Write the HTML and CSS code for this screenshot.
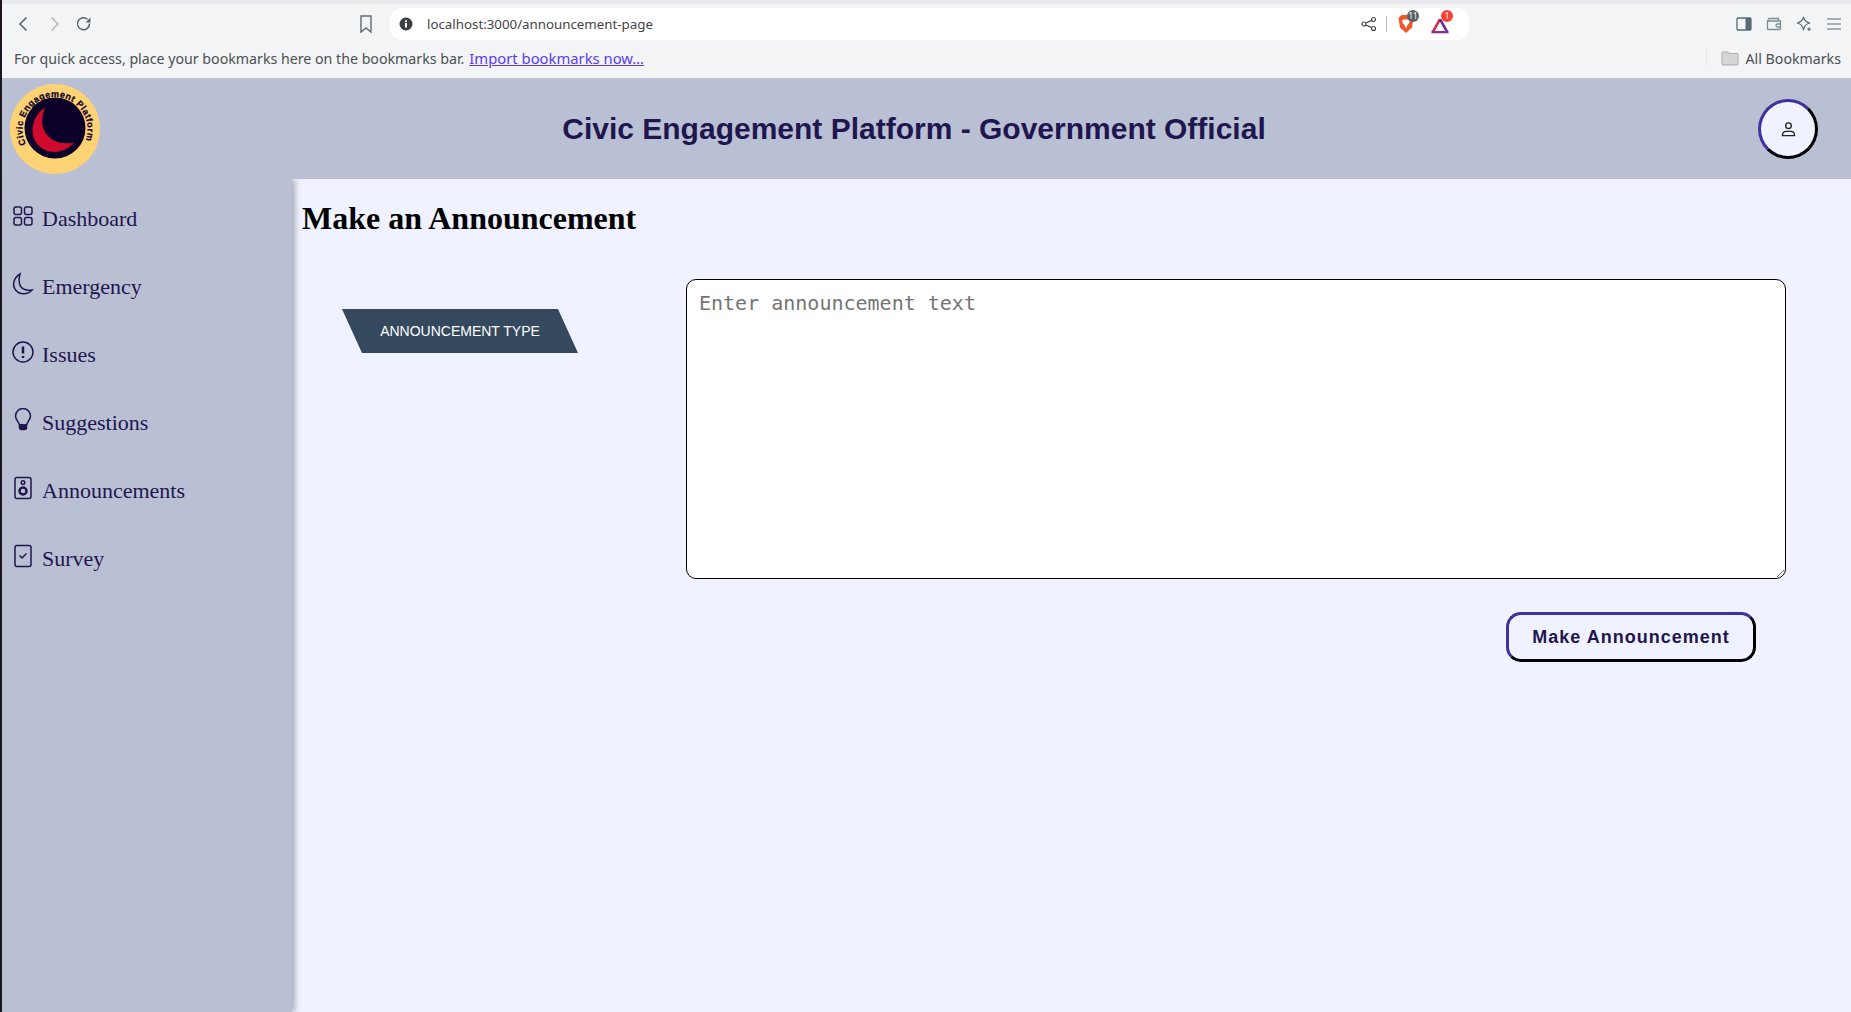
FILE: index.html
```html
<!DOCTYPE html>
<html lang="en">
<head>
	<meta charset="UTF-8">
	<title>Make an Announcement</title>
	<link rel="stylesheet" href="styles.css">
</head>
<body>
	<div class="window">
		<div class="tabstrip"></div>
		<div class="toolbar">
			<div class="nav-btns">
				<svg class="tool-icon" viewBox="0 0 20 20"><path d="M12.500 3.500 6 10l6.500 6.500"/></svg>
				<svg class="tool-icon faded" viewBox="0 0 20 20"><path d="M7.500 3.500 14 10l-6.500 6.500"/></svg>
				<svg class="tool-icon" viewBox="0 0 20 20"><path d="M15.500 9.500a6 6 0 1 1-2-4.300"/><path class="fill" d="M16.500 3.500v5h-5z"/></svg>
			</div>
			<svg class="bookmark-icon" viewBox="0 0 16 20"><path d="M3 2h10v16l-5-4-5 4z"/></svg>
			<div class="addressbar">
				<svg class="info-icon" viewBox="0 0 14 14"><circle cx="7" cy="7" r="6.500"/><rect x="6" y="6" width="2" height="4.500" fill="#fff"/><rect x="6" y="3.300" width="2" height="1.800" fill="#fff"/></svg>
				<span class="url">localhost:3000/announcement-page</span>
				<svg class="share-icon" viewBox="0 0 16 16"><circle cx="12.500" cy="3.500" r="2"/><circle cx="12.500" cy="12.500" r="2"/><circle cx="3" cy="8" r="2"/><path d="M4.800 7 10.700 4.400M4.800 9l5.900 2.600"/></svg>
				<span class="addr-sep"></span>
				<div class="ext">
					<svg viewBox="0 0 18 20" class="brave"><path d="M4.500 1h9l3 3-1.500 9.500L9 19l-6-5.500L1.500 4z" fill="#f1562b"/><path d="M5 6.500 7 5.500h4l2 1-1 3-1.500 1.500L9 14.500 7.500 11 6 9.500z" fill="#fff"/></svg>
					<span class="ext-badge grey">11</span>
				</div>
				<div class="ext rewards">
					<svg viewBox="0 0 20 18" class="triangle"><path d="M10 1.500 2 15.500" fill="none" stroke="#d9254f" stroke-width="2.800"/><path d="M10 1.500 18 15.500" fill="none" stroke="#662d91" stroke-width="2.800"/><path d="M0.500 15.800h19" stroke="#8a2f8f" stroke-width="2.600"/></svg>
					<span class="ext-badge red">1</span>
				</div>
			</div>
			<div class="tool-right">
				<svg viewBox="0 0 16 16" class="side-icon"><rect x="1" y="2" width="14" height="12" rx="1" fill="none" stroke="#566b75" stroke-width="1.300"/><rect x="9.500" y="2" width="5.500" height="12" fill="#566b75"/></svg>
				<svg viewBox="0 0 16 16" class="side-icon"><path d="M14.500 5H2.500a1 1 0 0 1-1-1v8.500a1 1 0 0 0 1 1h11a1 1 0 0 0 1-1zM2 3.500 3 2.500h9.500V5M14.500 8h-3a1.500 1.500 0 0 0 0 3h3" fill="none" stroke="#7a8c95" stroke-width="1.300"/></svg>
				<svg viewBox="0 0 16 16" class="side-icon"><path d="M7.500 1.200c.7 3 2.600 5 6.300 5.800-3.700.8-5.600 2.800-6.300 6.800-.7-4-2.600-6-6.300-6.800 3.700-.8 5.600-2.800 6.300-5.800z" fill="none" stroke="#566b75" stroke-width="1.200" stroke-linejoin="round"/><path d="M13 11.500v3.500M11.300 13.200h3.400" stroke="#566b75" stroke-width="1.200"/></svg>
				<svg viewBox="0 0 16 16" class="side-icon"><path d="M1 3h14M1 8h14M1 13h14" stroke="#566b75" stroke-width="1.200"/></svg>
			</div>
		</div>
		<div class="bookmarks">
			<span class="bm-msg">For quick access, place your bookmarks here on the bookmarks bar.</span>
			<a class="import-link" href="#">Import bookmarks now…</a>
			<span class="bm-sep"></span>
			<svg class="folder" viewBox="0 0 18 16"><path d="M1 3a1 1 0 0 1 1-1h5l1 1.500h8a1 1 0 0 1 1 1V14a1 1 0 0 1-1 1H2a1 1 0 0 1-1-1z" fill="#d6d6d6" stroke="#a9a9a9"/></svg>
			<span class="bm-all">All Bookmarks</span>
		</div>

		<header class="app-header">
			<svg class="logo" viewBox="0 0 90 90">
				<defs>
					<path id="logo-arc" d="M16 60A32.500 32.500 0 1 1 75 58"/>
				</defs>
				<circle cx="45" cy="45" r="45" fill="#ffd273"/>
				<circle cx="45" cy="44" r="30.500" fill="#0c0028"/>
				<path d="M35 23.700C24 30 20 45 24 55c5 11 18 15 26 12 6-1 11-5 14-8.300-8 1.300-14 .3-19-1.700C35 52 28 41 35 23.700z" fill="#cf0a2c"/>
				<text class="logo-text"><textPath href="#logo-arc" textLength="128" lengthAdjust="spacing">Civic Engagement Platform</textPath></text>
			</svg>
			<h1 class="app-title">Civic Engagement Platform - Government Official</h1>
			<button class="avatar" type="button">
				<svg viewBox="0 0 16 16"><circle cx="8" cy="4" r="3"/><path d="M1.500 14.500c0-3 1.500-4.500 4-4.500h5c2.500 0 4 1.500 4 4.500z"/></svg>
			</button>
		</header>

		<div class="app-body">
			<nav class="sidebar">
				<a class="nav-item" href="#">
					<svg viewBox="0 0 24 24"><rect x="3" y="3" width="7.500" height="7.500" rx="2"/><rect x="13.500" y="3" width="7.500" height="7.500" rx="2"/><rect x="3" y="13.500" width="7.500" height="7.500" rx="2"/><rect x="13.500" y="13.500" width="7.500" height="7.500" rx="2"/></svg>
					<span>Dashboard</span>
				</a>
				<a class="nav-item" href="#">
					<svg viewBox="0 0 24 24"><path d="M9 2C2 6 1 14 5 18.500c4 4.500 11.500 4.500 16-.5-7 1-11-1-12.500-6C7.500 8.500 8 5 9 2z"/></svg>
					<span>Emergency</span>
				</a>
				<a class="nav-item" href="#">
					<svg viewBox="0 0 24 24"><circle cx="12" cy="12" r="10"/><path class="thick" d="M12 6.500v7M12 16v2"/></svg>
					<span>Issues</span>
				</a>
				<a class="nav-item" href="#">
					<svg viewBox="0 0 24 24"><path d="M8.500 17c-.5-3-4-5-4-9a7.500 7.500 0 0 1 15 0c0 4-3.500 6-4 9z"/><path class="solid" d="M8.500 17h7v2.500a2 2 0 0 1-2 2h-3a2 2 0 0 1-2-2z"/></svg>
					<span>Suggestions</span>
				</a>
				<a class="nav-item" href="#">
					<svg viewBox="0 0 24 24"><rect x="4" y="1.500" width="16" height="21" rx="2"/><circle cx="12" cy="6.500" r="1.800"/><circle class="thick" cx="12" cy="15" r="3.500"/></svg>
					<span>Announcements</span>
				</a>
				<a class="nav-item" href="#">
					<svg viewBox="0 0 24 24"><rect x="4" y="1.500" width="16" height="21" rx="2"/><path d="M8.500 11.500l2.500 2.500 4.500-4.500"/></svg>
					<span>Survey</span>
				</a>
			</nav>

			<main class="content">
				<h2 class="page-title">Make an Announcement</h2>
				<div class="form-row">
					<div class="type-tag">ANNOUNCEMENT TYPE</div>
					<textarea class="announce-text" placeholder="Enter announcement text"></textarea>
				</div>
				<div class="form-actions">
					<button class="make-btn" type="button">Make Announcement</button>
				</div>
			</main>
		</div>
	</div>
</body>
</html>
```

FILE: styles.css
```css
*{margin: 0;padding: 0;box-sizing: border-box;}
html,body{height: 100%;overflow: hidden;}
body{background: #f0f3ff;}
.window{
	height: 1012px;
	display: flex;
	flex-direction: column;
	border-left: 2px solid #1c1622;
}

/* browser bar */
.tabstrip{
	height: 4px;
	background: #e9ebee;
}
.toolbar{
	height: 38px;
	padding-top: 1px;
	background: #f3f4f6;
	display: flex;
	align-items: center;
}
.nav-btns{
	display: flex;
	gap: 10px;
	margin-left: 12px;
	width: 344px;
}
.tool-icon{
	width: 20px;
	height: 20px;
	fill: none;
	stroke: #56636a;
	stroke-width: 1.5;
}
.tool-icon.faded{stroke: #b4babe;}
.tool-icon .fill{fill: #56636a;stroke: none;}
.bookmark-icon{
	width: 16px;
	height: 20px;
	fill: none;
	stroke: #5f6b72;
	stroke-width: 1.4;
}
.addressbar{
	margin-left: 16px;
	width: 1079px;
	height: 32px;
	background: #fff;
	border-radius: 12px;
	display: flex;
	align-items: center;
	padding-left: 9px;
}
.info-icon{width: 14px;height: 14px;fill: #3c3f42;}
.url{
	margin-left: 14px;
	font: 13.300px "Noto Sans", sans-serif;
	color: #3f4448;
	flex: 1;
}
.share-icon{
	width: 16px;
	height: 16px;
	fill: none;
	stroke: #44494d;
	stroke-width: 1.2;
}
.addr-sep{
	width: 1px;
	height: 16px;
	background: #b8bcc0;
	margin: 0 10px 0 9px;
}
.ext{position: relative;width: 18px;height: 20px;}
.ext svg{width: 18px;height: 20px;display: block;}
.ext.rewards{margin: 0 20px 0 16px;}
.ext.rewards svg{width: 18px;height: 18px;margin-top: 3px;}
.ext-badge{
	position: absolute;
	top: -4px;
	left: 10px;
	min-width: 12px;
	height: 12px;
	border-radius: 6px;
	font: 8px/12px "Noto Sans", sans-serif;
	color: #fff;
	text-align: center;
}
.ext-badge.grey{background: #5c5f68;}
.ext-badge.red{background: #f44336;}
.tool-right{
	margin-left: auto;
	display: flex;
	align-items: center;
	gap: 14px;
	margin-right: 9px;
}
.side-icon{width: 16px;height: 16px;}

.bookmarks{
	height: 37px;
	padding: 0 9px 4px 12px;
	background: #f3f4f6;
	border-bottom: 1px solid #c3c6d3;
	display: flex;
	align-items: center;
	font: 14px "Noto Sans", sans-serif;
	color: #4b5053;
}
.bm-msg{font-size: 14.200px;}
.bm-all{font-size: 14.200px;margin-right: 1px;}
.import-link{
	color: #5a3cf0;
	margin-left: 5px;
	font-size: 14.800px;
}
.bm-sep{
	margin-left: auto;
	width: 1px;
	height: 16px;
	background: #e3e5e8;
	margin-right: 14px;
}
.folder{width: 18px;height: 16px;margin-right: 7px;}

/* app */
.app-header{
	height: 100px;
	background: #bac0d3;
	display: flex;
	align-items: center;
	padding: 0 33px 0 8px;
	position: relative;
	z-index: 1;
}
.logo{width: 90px;height: 90px;flex: none;}
.logo-text{
	font: bold 9px "Liberation Sans", sans-serif;
	fill: #0c0028;
	stroke: #0c0028;
	stroke-width: .25;
}
.app-title{
	flex: 1;
	margin-right: 30px;
	text-align: center;
	font: bold 30px "Liberation Sans", sans-serif;
	color: #1f1650;
}
.avatar{
	width: 60px;
	height: 60px;
	border-radius: 50%;
	background: #f0f3ff;
	border: 3px solid;
	border-color: #41319c #000 #000 #41319c;
	display: flex;
	align-items: center;
	justify-content: center;
}
.avatar svg{
	width: 15px;
	height: 15px;
	fill: none;
	stroke: #222;
	stroke-width: 1.4;
}

.app-body{flex: 1;display: flex;min-height: 0;}
.sidebar{
	width: 290px;
	background: #bac0d3;
	box-shadow: 3px 0 6px rgba(0,0,0,.3);
	padding-top: 6px;
	display: flex;
	flex-direction: column;
}
.nav-item{
	height: 68px;
	display: flex;
	align-items: center;
	padding-left: 9px;
	font: 22px "Liberation Serif", serif;
	color: #1f1650;
	text-decoration: none;
}
.nav-item svg{
	width: 24px;
	height: 24px;
	flex: none;
	margin: -6px 7px 0 0;
	fill: none;
	stroke: #1f1650;
	stroke-width: 1.5;
}
.nav-item svg .thick{stroke-width: 2.5;}
.nav-item svg .solid{fill: #1f1650;}

.content{flex: 1;padding: 0 10px;}
.page-title{
	font: bold 32px "Liberation Serif", serif;
	color: #000;
	margin-top: 21px;
}
.form-row{
	display: flex;
	margin-top: 42px;
	padding-left: 40px;
}
.type-tag{
	width: 236px;
	height: 44px;
	margin-top: 30px;
	background: #34495e;
	color: #fff;
	font: 14px/44px "Liberation Sans", sans-serif;
	text-align: center;
	clip-path: polygon(0 0, 216px 0, 100% 100%, 20px 100%);
	flex: none;
}
.announce-text{
	width: 1100px;
	height: 300px;
	margin-left: 108px;
	border: 1px solid #000;
	border-radius: 10px;
	padding: 11px 12px;
	background: #fff;
	font: 20px "DejaVu Sans Mono", monospace;
}
.announce-text::placeholder{color: #757575;}
.form-actions{
	display: flex;
	justify-content: flex-end;
	margin-top: 33px;
	padding-right: 85px;
}
.make-btn{
	width: 250px;
	height: 50px;
	background: #f0f3ff;
	border: 3px solid;
	border-color: #41319c #000 #000 #41319c;
	border-radius: 15px;
	font: bold 18px "Liberation Sans", sans-serif;
	letter-spacing: 1px;
	color: #1f1650;
}
```
